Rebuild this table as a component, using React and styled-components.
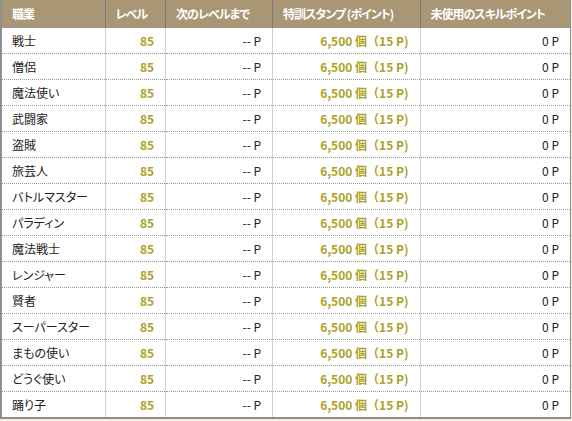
import styled, { createGlobalStyle } from "styled-components";

const GlobalStyle = createGlobalStyle`
    html, body {
        margin: 0;
        padding: 0;
        background-color: #f4eedf;
    }
    body {
        font-family: "Noto Sans CJK JP", "Noto Sans", sans-serif;
        font-feature-settings: "palt";
    }
`

const jobs = [
    "戦士", "僧侶", "魔法使い", "武闘家", "盗賊", "旅芸人", "バトルマスター",
    "パラディン", "魔法戦士", "レンジャー", "賢者", "スーパースター",
    "まもの使い", "どうぐ使い", "踊り子",
]

const columns = [
    { label: "職業", width: 103 },
    { label: "レベル", width: 60 },
    { label: "次のレベルまで", width: 106 },
    { label: "特訓スタンプ (ポイント)", width: 146 },
    { label: "未使用のスキルポイント", width: 149 },
]

export default function App(){
    return(
        <>
            <GlobalStyle/>
            <Table>
                <colgroup>
                    {columns.map(c => <col key={c.label} style={{width: c.width}}/>)}
                </colgroup>
                <thead>
                    <tr>
                        {columns.map(c => <HeadCell key={c.label}>{c.label}</HeadCell>)}
                    </tr>
                </thead>
                <tbody>
                    {jobs.map(job => (
                        <Row key={job}>
                            <Cell>{job}</Cell>
                            <Cell align="right" highlight>85</Cell>
                            <Cell align="right">-- P</Cell>
                            <Cell align="right" highlight>
                                6,500 個<Paren>（</Paren>15 P)
                            </Cell>
                            <Cell align="right">0 P</Cell>
                        </Row>
                    ))}
                </tbody>
            </Table>
        </>
    )
}

const Table = styled.table`
    width: 571px;
    border-collapse: collapse;
    table-layout: fixed;
    background-color: #ffffff;
    border-left: 2px solid #8e8e8e;
    border-right: 1px solid #8e8e8e;
    border-bottom: 2px solid #8e8e8e;
`
const HeadCell = styled.th`
    height: 27px;
    padding: 0 0 0 10px;
    background-color: #a99674;
    color: #ffffff;
    font-size: 12px;
    font-weight: 700;
    letter-spacing: -1px;
    text-align: left;
    border-left: 1px solid #7c7b85;
    border-bottom: 1px dotted #9a9a9a;
    white-space: nowrap;

    &:first-child{
        border-left: none;
    }
`
const Row = styled.tr`
    height: 26px;
    border-bottom: 1px dotted #9a9a9a;

    &:last-child{
        border-bottom: none;
    }
`
const Cell = styled.td`
    padding: 0 ${props => props.align === "right" ? "11px" : "0"} 0 ${props => props.align === "right" ? "0" : "10px"};
    text-align: ${props => props.align || "left"};
    font-size: 12px;
    font-weight: ${props => props.highlight ? 700 : 400};
    color: ${props => props.highlight ? "#aba21f" : "#222222"};
    border-left: 1px solid #d9d1bd;
    white-space: nowrap;

    &:first-child{
        border-left: none;
    }
`
const Paren = styled.span`
    font-feature-settings: normal;
`
